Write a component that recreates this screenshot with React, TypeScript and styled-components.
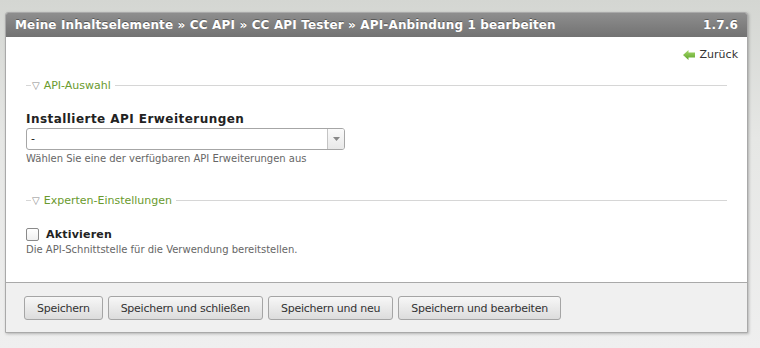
import styled, { createGlobalStyle } from "styled-components"

const GlobalStyle = createGlobalStyle`
	html, body {
		margin: 0;
		padding: 0;
	}
	body {
		width: 760px;
		height: 348px;
		overflow: hidden;
		background: linear-gradient(#d4d6d2, #e6e7e5 40%, #efefef);
		font-family: "DejaVu Sans", Verdana, sans-serif;
	}
`

const Page = styled.div`
	padding: 12px 12px 0 5px;
`

const Panel = styled.div`
	width: 743px;
	border: 1px solid #a9a9a9;
	border-radius: 3px 3px 0 0;
	background: #fff;
	box-shadow: 1px 1px 3px rgba(0, 0, 0, 0.25);
	box-sizing: border-box;
`

const Header = styled.div`
	display: flex;
	justify-content: space-between;
	align-items: center;
	height: 24px;
	padding: 0 9px 0 9px;
	background: linear-gradient(#8e8e8e, #727272);
	color: #fff;
	font-size: 12px;
	font-weight: bold;
	letter-spacing: 0.15px;
	text-shadow: 0 -1px 0 rgba(0, 0, 0, 0.35);
	border-radius: 2px 2px 0 0;
`

const Body = styled.div`
	padding: 11px 20px 27px 20px;
`

const BackRow = styled.div`
	display: flex;
	justify-content: flex-end;
	margin-right: -11px;
`

const BackLink = styled.a`
	display: flex;
	align-items: center;
	gap: 5px;
	font-size: 11px;
	color: #333;
	text-decoration: none;
`

const Fieldset = styled.div<{ $top: number }>`
	margin-top: ${p => p.$top}px;
`

const Legend = styled.div`
	display: flex;
	align-items: center;
	font-size: 11px;
	color: #6a9a2e;

	&::before {
		content: "";
		width: 5px;
		border-top: 1px solid #d6d6d6;
		margin-right: 1px;
	}

	&::after {
		content: "";
		flex: 1;
		border-top: 1px solid #d6d6d6;
		margin-left: 4px;
	}
`

const Tri = styled.span`
	font-size: 10px;
	color: #888;
	margin-right: 4px;
`

const Field = styled.div<{ $top: number }>`
	margin-top: ${p => p.$top}px;
`

const Label = styled.div`
	font-size: 12px;
	font-weight: bold;
	letter-spacing: 0.45px;
	color: #222;
	margin-bottom: 2px;
`

const Select = styled.div`
	display: flex;
	width: 319px;
	height: 22px;
	border: 1px solid #a6a6a6;
	border-radius: 3px;
	box-sizing: border-box;
	background: #fff;
	overflow: hidden;
`

const SelectValue = styled.div`
	flex: 1;
	font-size: 11px;
	line-height: 20px;
	padding-left: 4px;
	color: #111;
`

const SelectArrow = styled.div`
	width: 16px;
	border-left: 1px solid #c4c4c4;
	background: linear-gradient(#fafafa, #e8e8e8);
	display: flex;
	align-items: center;
	justify-content: center;
`

const Help = styled.div`
	font-size: 10px;
	color: #666;
	margin-top: 3px;
`

const CheckRow = styled.label`
	display: flex;
	align-items: center;
	gap: 7px;
	font-size: 11px;
	font-weight: bold;
	letter-spacing: 0.2px;
	color: #222;
`

const Box = styled.span`
	width: 11px;
	height: 11px;
	border: 1px solid #8a8a8a;
	border-radius: 2px;
	background: linear-gradient(#fff, #f0f0f0);
`

const Footer = styled.div`
	display: flex;
	gap: 5px;
	padding: 13px 18px 12px 18px;
	background: #f0f0f0;
	border-top: 1px solid #a9a9a9;
`

const Button = styled.button`
	height: 24px;
	padding: 0 12px;
	border: 1px solid #a5a5a5;
	border-radius: 3px;
	background: linear-gradient(#f7f7f7, #dcdcdc);
	font-family: "DejaVu Sans", Verdana, sans-serif;
	font-size: 11px;
	letter-spacing: -0.25px;
	color: #333;
`

const buttons = ["Speichern", "Speichern und schließen", "Speichern und neu", "Speichern und bearbeiten"]

const App = () => {

	return (

		<Page>

			<GlobalStyle />

			<Panel>

				<Header>
					<span>Meine Inhaltselemente » CC API » CC API Tester » API-Anbindung 1 bearbeiten</span>
					<span>1.7.6</span>
				</Header>

				<Body>

					<BackRow>
						<BackLink href="#">
							<svg width="12" height="10" viewBox="0 0 12 10">
								<defs>
									<linearGradient id="g" x1="0" y1="0" x2="0" y2="1">
										<stop offset="0" stopColor="#a6d86a" />
										<stop offset="1" stopColor="#5ea52a" />
									</linearGradient>
								</defs>
								<path d="M0 5 L5.5 0 L5.5 2.5 L12 2.5 L12 7.5 L5.5 7.5 L5.5 10 Z" fill="url(#g)" />
							</svg>
							Zurück
						</BackLink>
					</BackRow>

					<Fieldset $top={18}>
						<Legend><Tri>▽</Tri>API-Auswahl</Legend>
						<Field $top={20}>
							<Label>Installierte API Erweiterungen</Label>
							<Select>
								<SelectValue>-</SelectValue>
								<SelectArrow>
									<svg width="7" height="4" viewBox="0 0 7 4">
										<path d="M0 0 L7 0 L3.5 4 Z" fill="#888" />
									</svg>
								</SelectArrow>
							</Select>
							<Help>Wählen Sie eine der verfügbaren API Erweiterungen aus</Help>
						</Field>
					</Fieldset>

					<Fieldset $top={30}>
						<Legend><Tri>▽</Tri>Experten-Einstellungen</Legend>
						<Field $top={21}>
							<CheckRow><Box />Aktivieren</CheckRow>
							<Help>Die API-Schnittstelle für die Verwendung bereitstellen.</Help>
						</Field>
					</Fieldset>

				</Body>

				<Footer>
					{buttons.map(b => <Button key={b}>{b}</Button>)}
				</Footer>

			</Panel>

		</Page>

	)

}

export default App
